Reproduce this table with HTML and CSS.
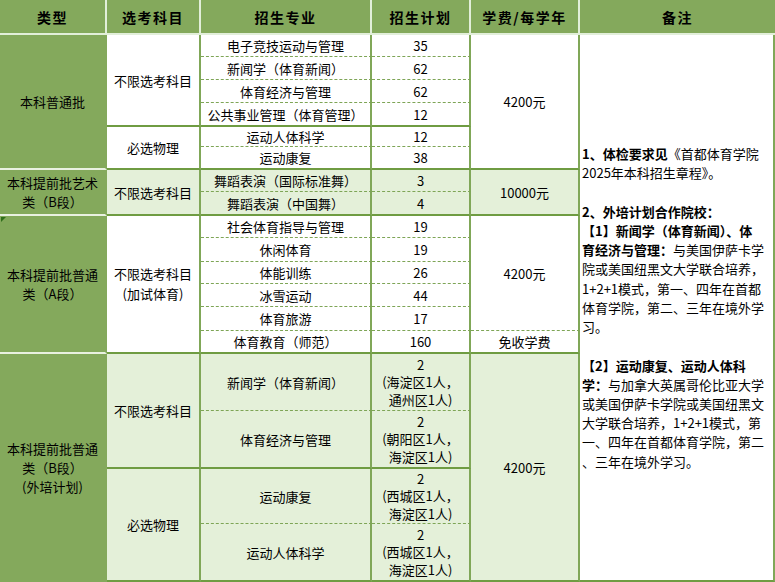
FILE: index.html
```html
<!DOCTYPE html>
<html lang="zh-CN">
<head>
<meta charset="utf-8">
<title>招生计划</title>
<link rel="stylesheet" href="styles.css">
</head>
<body>
<table class="plan">
  <colgroup>
    <col class="c1"><col class="c2"><col class="c3"><col class="c4"><col class="c5"><col class="c6">
  </colgroup>
  <thead>
    <tr class="h35">
      <th>类型</th><th>选考科目</th><th>招生专业</th><th>招生计划</th><th>学费/每学年</th><th class="last">备注</th>
    </tr>
  </thead>
  <tbody>
    <tr class="h22">
      <td rowspan="6" class="type">本科普通批</td>
      <td rowspan="4" class="solid">不限选考科目</td>
      <td class="dash">电子竞技运动与管理</td>
      <td class="dash">35</td>
      <td rowspan="6" class="solid">4200元</td>
      <td rowspan="18" class="note">
        <span class="ln"><b>1、体检要求见</b>《首都体育学院</span>
        <span class="ln">2025年本科招生章程》。</span>
        <span class="ln">&nbsp;</span>
        <span class="ln"><b>2、外培计划合作院校：</b></span>
        <span class="ln"><b>【1】新闻学（体育新闻）、体</b></span>
        <span class="ln"><b>育经济与管理：</b>与美国伊萨卡学</span>
        <span class="ln">院或美国纽黑文大学联合培养，</span>
        <span class="ln">1+2+1模式，第一、四年在首都</span>
        <span class="ln">体育学院，第二、三年在境外学</span>
        <span class="ln">习。</span>
        <span class="ln">&nbsp;</span>
        <span class="ln"><b>【2】运动康复、运动人体科</b></span>
        <span class="ln"><b>学：</b>与加拿大英属哥伦比亚大学</span>
        <span class="ln">或美国伊萨卡学院或美国纽黑文</span>
        <span class="ln">大学联合培养，1+2+1模式，第</span>
        <span class="ln">一、四年在首都体育学院，第二</span>
        <span class="ln">、三年在境外学习。</span>
      </td>
    </tr>
    <tr class="h23"><td class="dash">新闻学（体育新闻）</td><td class="dash">62</td></tr>
    <tr class="h23"><td class="dash">体育经济与管理</td><td class="dash">62</td></tr>
    <tr class="h24"><td class="solid">公共事业管理（体育管理）</td><td class="solid">12</td></tr>
    <tr class="h20">
      <td rowspan="2" class="solid">必选物理</td>
      <td class="dash">运动人体科学</td><td class="dash">12</td>
    </tr>
    <tr class="h23"><td class="solid">运动康复</td><td class="solid">38</td></tr>

    <tr class="h22 tint">
      <td rowspan="2" class="type">本科提前批艺术<br>类（B段）</td>
      <td rowspan="2" class="solid">不限选考科目</td>
      <td class="dash">舞蹈表演（国际标准舞）</td>
      <td class="dash">3</td>
      <td rowspan="2" class="solid">10000元</td>
    </tr>
    <tr class="h24 tint"><td class="solid">舞蹈表演（中国舞）</td><td class="solid">4</td></tr>

    <tr class="h22">
      <td rowspan="6" class="type flag">本科提前批普通<br>类（A段）</td>
      <td rowspan="6" class="solid pair">不限选考科目<br>(加试体育)</td>
      <td class="dash">社会体育指导与管理</td>
      <td class="dash">19</td>
      <td rowspan="5" class="dash">4200元</td>
    </tr>
    <tr class="h24"><td class="dash">休闲体育</td><td class="dash">19</td></tr>
    <tr class="h22"><td class="dash">体能训练</td><td class="dash">26</td></tr>
    <tr class="h23"><td class="dash">冰雪运动</td><td class="dash">44</td></tr>
    <tr class="h24"><td class="dash">体育旅游</td><td class="dash">17</td></tr>
    <tr class="h23"><td class="solid">体育教育（师范）</td><td class="solid">160</td><td class="solid">免收学费</td></tr>

    <tr class="h57 tint">
      <td rowspan="4" class="type end">本科提前批普通<br>类（B段）<br>(外培计划)</td>
      <td rowspan="2" class="solid">不限选考科目</td>
      <td class="dash">新闻学（体育新闻）</td>
      <td class="dash multi">2<br>(海淀区1人，<br>通州区1人)</td>
      <td rowspan="4" class="solid">4200元</td>
    </tr>
    <tr class="h58 tint"><td class="solid">体育经济与管理</td><td class="solid multi">2<br>(朝阳区1人，<br>海淀区1人)</td></tr>
    <tr class="h55 tint">
      <td rowspan="2" class="solid">必选物理</td>
      <td class="dash">运动康复</td>
      <td class="dash multi">2<br>(西城区1人，<br>海淀区1人)</td>
    </tr>
    <tr class="h58 tint"><td class="solid">运动人体科学</td><td class="solid multi">2<br>(西城区1人，<br>海淀区1人)</td></tr>
  </tbody>
</table>
</body>
</html>
```

FILE: styles.css
```css
html, body {
  margin: 0;
  padding: 0;
  background: #ffffff;
}

.plan {
  border-collapse: separate;
  border-spacing: 0;
  table-layout: fixed;
  width: 775px;
  font-family: "Noto Sans CJK SC", "Noto Sans", sans-serif;
  font-size: 13px;
  color: #000000;
}

.c1 { width: 107px; }
.c2 { width: 94px; }
.c3 { width: 171px; }
.c4 { width: 99px; }
.c5 { width: 109px; }
.c6 { width: 195px; }

.h20 { height: 20px; }
.h22 { height: 22px; }
.h23 { height: 23px; }
.h24 { height: 24px; }
.h35 { height: 35px; }
.h55 { height: 55px; }
.h57 { height: 57px; }
.h58 { height: 58px; }

.plan th {
  background: #84a95c;
  font-size: 14px;
  font-weight: bold;
  letter-spacing: 1.5px;
  padding: 0;
  text-align: center;
  vertical-align: middle;
  border-right: 2px solid #e2efda;
  border-bottom: 2px solid #e2efda;
  line-height: 18px;
}

.plan th.last {
  border-right: none;
}

.plan td {
  padding: 0;
  text-align: center;
  vertical-align: middle;
  line-height: 17px;
  border-right: 2px solid #80a758;
  white-space: nowrap;
  overflow: hidden;
}

.tint td {
  background: #e4f0d9;
}

.plan td.dash {
  border-bottom: 1px dashed #7ea556;
}

.plan td.solid {
  border-bottom: 2px solid #6f9c42;
}

.plan td.pair {
  line-height: 20px;
}

.plan td.type {
  background: #84a95c;
  border-right: 2px solid #84a95c;
  border-bottom: 2px solid #e9f1e1;
  line-height: 19px;
}

.plan td.type.end {
  border-bottom: 2px solid #84a95c;
}

.plan td.flag {
  position: relative;
}

.plan td.flag::before {
  content: "";
  position: absolute;
  left: 1px;
  top: 1px;
  width: 0;
  height: 0;
  border-top: 5px solid #2f6f1a;
  border-right: 5px solid transparent;
}

.plan td.multi {
  line-height: 17.5px;
}

.plan td.note {
  background: #ffffff;
  text-align: left;
  padding-left: 2px;
  line-height: 19.2px;
  border-right: 2px solid #80a758;
  border-bottom: 2px solid #6f9c42;
}

.ln {
  display: block;
  white-space: nowrap;
}

.ln b {
  font-weight: bold;
}
```
